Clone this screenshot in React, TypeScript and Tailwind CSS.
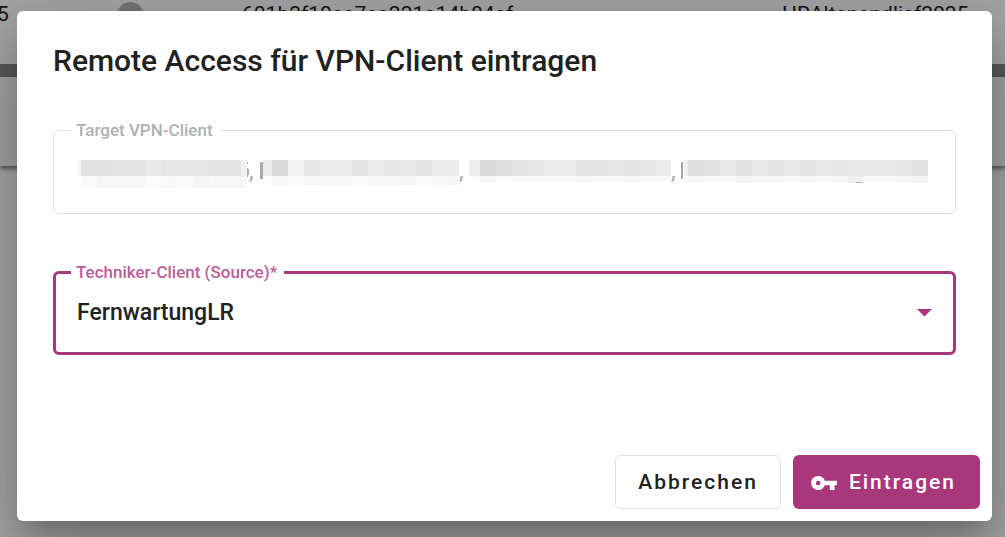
import React, { useState } from "react";
import { MdVpnKey } from "react-icons/md";

const CLIENTS = ["FernwartungLR", "FernwartungHR", "Techniker-Notebook"];

type MosaicData = {
    lead: number;
    top: string[];
    bottom: string[];
    width: number;
    topHeight: number;
    height: number;
    // bits of the covered name that stick out
    rest?: string;
};

// Anonymised client names: one grey value per 16px block
const MOSAICS: MosaicData[] = [
    {
        lead: 4,
        top: ["#f6f6f6", "#e2e2e2", "#e1e1e1", "#e3e3e3", "#e4e4e4", "#e9e9e9", "#e6e6e6", "#e6e6e6", "#e6e6e6", "#e5e5e5", "#e4e4e4", "#f0f0f0"],
        bottom: ["#fefefe", "#fafafa", "#f7f7f7", "#f7f7f7", "#f7f7f7", "#fbfbfb", "#f9f9f9", "#fafafa", "#f5f5f5", "#f8f8f8", "#f6f6f6", "#f8f8f8"],
        width: 172,
        topHeight: 16,
        height: 28,
        rest: "M170 2h1v2h-1zM170 8h1v1h1v6h-1v2h-1z",
    },
    {
        lead: 9,
        top: ["#ebebeb", "#dadada", "#f2f2f2", "#e6e6e6", "#ebebeb", "#ebebeb", "#e3e3e3", "#ececec", "#e6e6e6", "#e8e8e8", "#e4e4e4", "#ebebeb", "#ececec"],
        bottom: ["#fcfcfc", "#f7f7f7", "#fafafa", "#f6f6f6", "#f7f7f7", "#f7f7f7", "#fafafa", "#f7f7f7", "#f7f7f7", "#f5f5f5", "#fafafa", "#f8f8f8", "#f5f5f5"],
        width: 196,
        topHeight: 16,
        height: 25,
    },
    {
        lead: 11,
        top: ["#eeeeee", "#dbdbdb", "#e0e0e0", "#e5e5e5", "#e7e7e7", "#ececec", "#ececec", "#e3e3e3", "#e3e3e3", "#e6e6e6", "#e4e4e4", "#e6e6e6", "#ebebeb"],
        bottom: ["#fdfdfd", "#f6f6f6", "#fdfdfd", "#f8f8f8", "#f8f8f8", "#f9f9f9", "#f9f9f9", "#f7f7f7", "#f9f9f9", "#f8f8f8", "#f6f6f6", "#f8f8f8", "#f8f8f8"],
        width: 202,
        topHeight: 16,
        height: 22,
    },
    {
        lead: 4,
        top: ["#efefef", "#e0e0e0", "#e2e2e2", "#eaeaea", "#e1e1e1", "#e8e8e8", "#e5e5e5", "#e9e9e9", "#e5e5e5", "#eaeaea", "#e7e7e7", "#e8e8e8", "#eaeaea", "#e9e9e9", "#e6e6e6", "#e2e2e2"],
        bottom: ["#fcfcfc", "#f8f8f8", "#fafafa", "#fafafa", "#f6f6f6", "#f8f8f8", "#f8f8f8", "#fafafa", "#f8f8f8", "#fafafa", "#f8f8f8", "#efefef", "#fafafa", "#fafafa", "#f8f8f8", "#f6f6f6"],
        width: 244,
        topHeight: 16,
        height: 23,
        rest: "M172 22h6v1h-6z",
    },
];

function Mosaic({ data }: { data: MosaicData }) {
    const cellX = (i: number) => (i === 0 ? 0 : data.lead + (i - 1) * 16);
    const cellWidth = (i: number) => {
        if (i === 0) return data.lead;
        // the first block row ends before the strip that the rest is drawn in
        return data.rest && i === data.top.length - 1 && data.lead + i * 16 > 170 && data.width < 180 ? 6 : 16;
    };
    return (
        <svg width={data.width} height={data.height} className="shrink-0" shapeRendering="crispEdges" aria-hidden="true">
            {data.top.map((fill, i) => (
                <rect key={`t${i}`} x={cellX(i)} y={0} width={cellWidth(i)} height={data.topHeight} fill={fill} />
            ))}
            {data.bottom.map((fill, i) => (
                <rect
                    key={`b${i}`}
                    x={cellX(i)}
                    y={data.topHeight}
                    width={cellWidth(i)}
                    height={data.height - data.topHeight}
                    fill={fill}
                />
            ))}
            {data.rest && <path d={data.rest} fill="#b0b0b0" />}
        </svg>
    );
}

function ClientTablePage() {
    return (
        <div className="col-start-1 row-start-1 overflow-hidden bg-[#a4a4a4]" aria-hidden="true">
            <div className="flex h-16 items-start pt-0.5 text-[21px] leading-6 text-[#151515]">
                <span className="-ml-[3px] w-[120px] shrink-0">5</span>
                <span className="size-[27px] shrink-0 rounded-full bg-[#757575]" />
                <span className="ml-[98px] w-[540px] shrink-0">601b2f10ae7ea221a14b84af</span>
                <span className="shrink-0">HRAltenendlisf2025</span>
            </div>
            <div className="h-[13px] bg-[#585858]" />
            <div className="h-[89px] bg-[#a2a2a2] shadow-[0_3px_4px_0_rgba(0,0,0,0.45)]" />
        </div>
    );
}

function TargetField() {
    return (
        <fieldset className="min-w-0 rounded-md border border-[#e0e0e0] px-[23px] pb-[25px]">
            <legend className="-ml-1.5 pr-[7px] pl-[5px] text-[17px] leading-5 font-medium text-[#b0b0b0]">
                <label htmlFor="target-client">Target VPN-Client</label>
            </legend>
            <div className="grid pt-5">
                <input
                    id="target-client"
                    type="text"
                    disabled
                    className="col-start-1 row-start-1 h-7 w-full min-w-0 bg-transparent text-[23px]"
                />
                <div className="pointer-events-none col-start-1 row-start-1 flex h-7 items-start text-[23px] leading-6 text-[#a8a8a8]">
                    <Mosaic data={MOSAICS[0]} />
                    <span className="w-[11px] shrink-0">,</span>
                    <span className="mt-0.5 h-[17px] w-[3px] shrink-0 bg-[#a8a8a8]" />
                    <Mosaic data={MOSAICS[1]} />
                    <span className="w-2.5 shrink-0">,</span>
                    <Mosaic data={MOSAICS[2]} />
                    <span className="w-2.5 shrink-0">,</span>
                    <span className="mt-0.5 mr-px h-[17px] w-0.5 shrink-0 bg-[#a8a8a8]" />
                    <Mosaic data={MOSAICS[3]} />
                </div>
            </div>
        </fieldset>
    );
}

function SourceField() {
    const [source, setSource] = useState(CLIENTS[0]);
    return (
        <fieldset className="mt-12 min-w-0 rounded-md border-3 border-[#a8377b] px-[21px] pb-[21px]">
            <legend className="-ml-1.5 pr-[7px] pl-[5px] text-[17px] leading-5 font-medium text-[#bb5e97]">
                <label htmlFor="source-client">Techniker-Client (Source)*</label>
            </legend>
            <div className="grid items-center pt-[13px]">
                <select
                    id="source-client"
                    value={source}
                    onChange={(e) => setSource(e.target.value)}
                    className="col-start-1 row-start-1 h-9 w-full appearance-none bg-transparent text-[23px] font-medium text-[#212121] outline-none"
                >
                    {CLIENTS.map((client) => (
                        <option key={client}>{client}</option>
                    ))}
                </select>
                <svg
                    viewBox="0 0 15 8"
                    className="pointer-events-none col-start-1 row-start-1 h-2 w-[15px] justify-self-end text-[#a8377b]"
                    aria-hidden="true"
                >
                    <path d="M0 0h15L7.5 7.5z" fill="currentColor" />
                </svg>
            </div>
        </fieldset>
    );
}

export default function App() {
    return (
        <div className="grid min-h-screen grid-cols-1 overflow-hidden font-['Roboto',sans-serif]">
            <ClientTablePage />
            <div
                role="dialog"
                aria-modal="true"
                aria-labelledby="dialog-title"
                className="z-10 col-start-1 row-start-1 mt-[11px] mr-[13px] mb-4 ml-[17px] flex flex-col rounded-md bg-white shadow-[0_16px_22px_-10px_rgba(0,0,0,0.2),0_36px_57px_4px_rgba(0,0,0,0.14),0_13px_69px_12px_rgba(0,0,0,0.12)]"
            >
                <h1 id="dialog-title" className="px-9 pt-8 text-[30px] leading-9 font-medium text-[#212121]">
                    Remote Access für VPN-Client eintragen
                </h1>
                <div className="px-9 pt-[41px]">
                    <TargetField />
                    <SourceField />
                </div>
                <div className="mt-auto flex justify-end gap-3 p-3 text-[21px] font-medium tracking-[2px]">
                    <button type="button" className="h-[54px] rounded-md border border-[#e0e0e0] px-[22px] pt-0.5 text-[#212121]">
                        Abbrechen
                    </button>
                    <button type="button" className="flex h-[54px] items-center gap-[11px] rounded-md bg-[#a8377b] pt-0.5 pr-6 pl-[17px] text-white">
                        <MdVpnKey className="size-7" aria-hidden="true" />
                        Eintragen
                    </button>
                </div>
            </div>
        </div>
    );
}
